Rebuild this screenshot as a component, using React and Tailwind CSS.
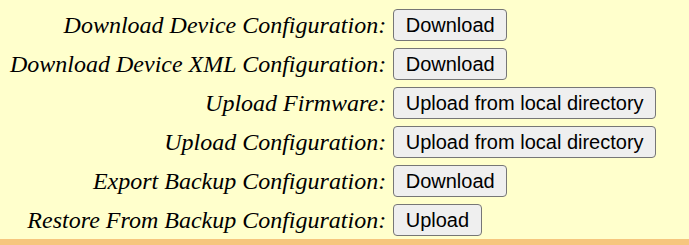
const ROWS = [
  { label: "Download Device Configuration:", button: "Download" },
  { label: "Download Device XML Configuration:", button: "Download" },
  { label: "Upload Firmware:", button: "Upload from local directory" },
  { label: "Upload Configuration:", button: "Upload from local directory" },
  { label: "Export Backup Configuration:", button: "Download" },
  { label: "Restore From Backup Configuration:", button: "Upload" },
];

export default function App() {
  return (
    <div className="min-h-[245px] bg-[#ffffcc] flex flex-col">
      <div className="grid grid-cols-[auto_auto] justify-start gap-x-[7px] gap-y-[7px] pt-[9px] pb-[3px] pl-[10px] items-center">
        {ROWS.map((row, i) => (
          <div key={i} className="contents">
            <span className="text-right italic text-[24px] leading-none text-black font-['Liberation_Serif',serif]">
              {row.label}
            </span>
            <div>
              <button className="h-[32px] px-[11.5px] rounded-[4px] border border-[#767676] bg-[#efefef] text-[20px] leading-none text-black font-['Liberation_Sans',Arial,sans-serif]">
                {row.button}
              </button>
            </div>
          </div>
        ))}
      </div>
      <div className="h-[10px] bg-[#f6c67e]" />
    </div>
  );
}
